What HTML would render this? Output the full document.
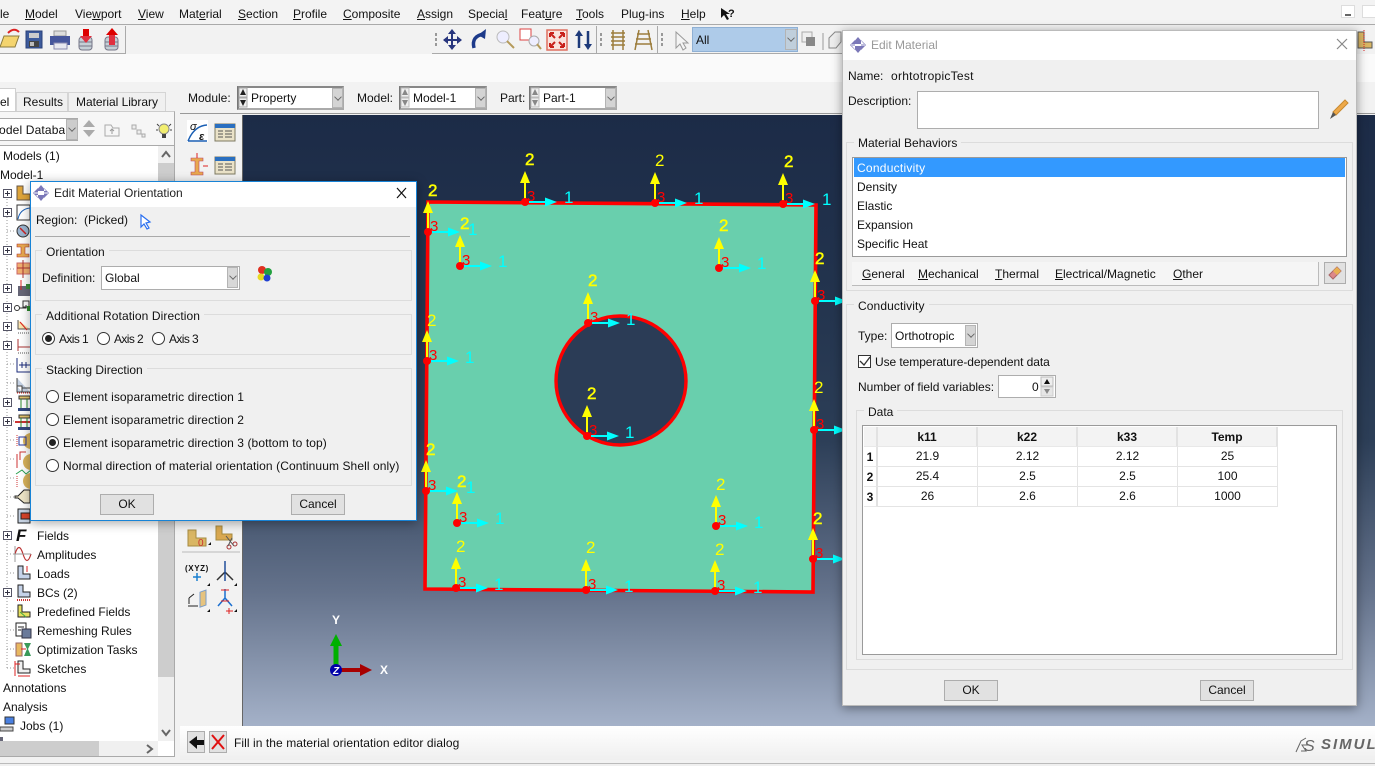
<!DOCTYPE html>
<html><head><meta charset="utf-8"><title>Abaqus</title>
<style>
html,body{margin:0;padding:0;background:#f0f0f0}
#p{position:relative;width:1375px;height:766px;overflow:hidden;background:#f2f2f2;font:12px/14px "Liberation Sans",sans-serif;color:#111}
.t{position:absolute;white-space:nowrap;font:12px/14px "Liberation Sans",sans-serif;color:#111}
.o{letter-spacing:.09px}
.a{letter-spacing:-.6px}
.b{position:absolute;box-sizing:border-box}
.g{position:absolute;box-sizing:border-box;border:1px solid #dcdcdc}
.btn{position:absolute;box-sizing:border-box;background:#e1e1e1;border:1px solid #adadad;text-align:center;line-height:19px;font-size:12px;color:#111}
.dd{position:absolute;box-sizing:border-box;background:#d4d4d4;border:1px solid #b4b4b4}
.dd:after{content:"";position:absolute;left:2px;top:5px;width:5px;height:5px;border-right:1px solid #666;border-bottom:1px solid #666;transform:rotate(45deg) scale(.9)}
.rad{position:absolute;box-sizing:border-box;width:13px;height:13px;border:1px solid #333;border-radius:50%;background:#fff}
.rad.on:after{content:"";position:absolute;left:2px;top:2px;width:7px;height:7px;border-radius:50%;background:#222}
svg{position:absolute;left:0;top:0;overflow:visible}
svg text{font-family:"Liberation Sans",sans-serif}
.y{fill:#ffff00;font-size:17px}.k{stroke:#ff0;stroke-width:.5}.r{fill:#f00;font-size:15px}.c{fill:#00ffff;font-size:17px}
.th{position:absolute;box-sizing:border-box;background:#f3f3f3;border-right:2px solid #e2e2e2;border-bottom:1px solid #e8e8e8;font-weight:bold;text-align:center;line-height:20px;height:20px;font-size:12px}
.td{position:absolute;box-sizing:border-box;border-right:1px solid #e4e4e4;border-bottom:1px solid #e4e4e4;text-align:center;line-height:19px;height:20px;font-size:12px}
</style></head><body><div id="p">

<!-- top menu -->
<div class="b" style="left:0;top:0;width:1375px;height:25px;background:#f3f3f3;border-bottom:1px solid #aaa"></div>
<div class="t" style="left:0;top:7px">le</div>
<div class="t" style="left:25px;top:7px"><u>M</u>odel</div>
<div class="t" style="left:75px;top:7px">Vie<u>w</u>port</div>
<div class="t" style="left:138px;top:7px"><u>V</u>iew</div>
<div class="t" style="left:179px;top:7px">Mat<u>e</u>rial</div>
<div class="t" style="left:238px;top:7px"><u>S</u>ection</div>
<div class="t" style="left:293px;top:7px"><u>P</u>rofile</div>
<div class="t" style="left:343px;top:7px"><u>C</u>omposite</div>
<div class="t" style="left:417px;top:7px"><u>A</u>ssign</div>
<div class="t" style="left:468px;top:7px">Specia<u>l</u></div>
<div class="t" style="left:521px;top:7px">Feat<u>u</u>re</div>
<div class="t" style="left:576px;top:7px"><u>T</u>ools</div>
<div class="t" style="left:621px;top:7px">Plu<u>g</u>-ins</div>
<div class="t" style="left:681px;top:7px"><u>H</u>elp</div>
<div class="t" style="left:728px;top:7px;font-weight:bold;font-size:11px">?</div>

<!-- toolbars -->
<div class="b" style="left:0;top:26px;width:126px;height:28px;background:#f2f2f2;border-right:1px solid #aaa;border-bottom:1px solid #aaa"></div>
<div class="b" style="left:432px;top:26px;width:410px;height:28px;background:#f2f2f2;border-bottom:1px solid #aaa"></div>
<div class="b" style="left:596px;top:26px;width:1px;height:27px;background:#aaa"></div>
<div class="b" style="left:657px;top:26px;width:1px;height:27px;background:#aaa"></div>
<div class="b" style="left:126px;top:54px;width:1249px;height:28px;background:#fafafa"></div>
<div class="b" style="left:0;top:54px;width:126px;height:28px;background:#fafafa"></div>
<div class="b" style="left:692px;top:27px;width:106px;height:25px;background:#aecbe9;border:1px solid #8fb0d4"></div>
<div class="t" style="left:696px;top:33px">All</div>
<div class="dd" style="left:785px;top:29px;width:12px;height:21px;background:#c0cfdc"></div>
<!-- module bar -->
<div class="b" style="left:180px;top:82px;width:1195px;height:32px;background:#f2f2f2;border-bottom:1px solid #999"></div>
<div class="t" style="left:188px;top:91px">Module:</div>
<div class="b" style="left:237px;top:86px;width:107px;height:24px;background:#fff;border:2px solid #aaa;border-left-color:#777;border-top-color:#888"></div>
<div class="dd" style="left:332px;top:88px;width:11px;height:20px"></div>
<div class="t" style="left:251px;top:91px">Property</div>
<div class="t" style="left:357px;top:91px">Model:</div>
<div class="b" style="left:399px;top:86px;width:88px;height:24px;background:#fff;border:2px solid #aaa;border-left-color:#777;border-top-color:#888"></div>
<div class="dd" style="left:475px;top:88px;width:11px;height:20px"></div>
<div class="t" style="left:413px;top:91px">Model-1</div>
<div class="t" style="left:500px;top:91px">Part:</div>
<div class="b" style="left:529px;top:86px;width:88px;height:24px;background:#fff;border:2px solid #aaa;border-left-color:#777;border-top-color:#888"></div>
<div class="dd" style="left:605px;top:88px;width:11px;height:20px"></div>
<div class="t" style="left:543px;top:91px">Part-1</div>

<!-- left panel -->
<div class="b" style="left:0;top:88px;width:16px;height:24px;background:#fff;border:1px solid #d0d0d0;border-left:0;border-bottom:0"></div>
<div class="b" style="left:16px;top:92px;width:52px;height:19px;background:#f0f0f0;border:1px solid #d5d5d5;border-bottom:0"></div>
<div class="b" style="left:68px;top:92px;width:98px;height:19px;background:#f0f0f0;border:1px solid #d5d5d5;border-bottom:0"></div>
<div class="t" style="left:0;top:95px">el</div>
<div class="t" style="left:23px;top:95px">Results</div>
<div class="t" style="left:76px;top:95px;letter-spacing:-.05px">Material Library</div>
<div class="b" style="left:0;top:111px;width:175px;height:34px;background:#f6f6f6;border-right:1px solid #aaa;border-top:1px solid #ccc"></div>
<div class="b" style="left:0;top:145px;width:175px;height:612px;background:#fff;border-right:1px solid #aaa;border-top:1px solid #aaa;border-bottom:1px solid #aaa"></div>
<div class="b" style="left:0;top:118px;width:78px;height:23px;background:#fff;border:1px solid #aaa;border-left:0"></div>
<div class="dd" style="left:66px;top:119px;width:12px;height:21px;background:#ccc"></div>
<div class="t" style="left:-1px;top:123px;width:66px;overflow:hidden;letter-spacing:.15px">odel Databas</div>
<!-- scrollbars -->
<div class="b" style="left:158px;top:146px;width:16px;height:595px;background:#f0f0f0"></div>
<div class="b" style="left:158px;top:163px;width:16px;height:514px;background:#cdcdcd"></div>
<div class="b" style="left:0;top:741px;width:158px;height:15px;background:#f0f0f0"></div>
<div class="b" style="left:0;top:741px;width:99px;height:15px;background:#cdcdcd"></div>

<!-- tree text -->
<div class="t" style="left:3px;top:149px">Models (1)</div>
<div class="t" style="left:0;top:168px">Model-1</div>
<div class="t" style="left:37px;top:529px">Fields</div>
<div class="t" style="left:37px;top:548px">Amplitudes</div>
<div class="t" style="left:37px;top:567px">Loads</div>
<div class="t" style="left:37px;top:586px">BCs (2)</div>
<div class="t" style="left:37px;top:605px">Predefined Fields</div>
<div class="t" style="left:37px;top:624px">Remeshing Rules</div>
<div class="t" style="left:37px;top:643px">Optimization Tasks</div>
<div class="t" style="left:37px;top:662px">Sketches</div>
<div class="t" style="left:3px;top:681px">Annotations</div>
<div class="t" style="left:3px;top:700px">Analysis</div>
<div class="t" style="left:20px;top:719px">Jobs (1)</div>

<!-- viewport & bottom bar -->
<div class="b" style="left:242px;top:115px;width:1133px;height:611px;background:linear-gradient(180deg,#1c2b47 0%,#23344e 30%,#2c3e57 53%,#64728b 78%,#a4b1c8 100%);border-left:1px solid #666"></div>
<div class="b" style="left:180px;top:726px;width:1195px;height:34px;background:linear-gradient(180deg,#fff,#efefef)"></div>
<div class="b" style="left:0;top:763px;width:1375px;height:3px;background:#f0f0f0;border-top:1px solid #bbb"></div>
<div class="b" style="left:187px;top:731px;width:18px;height:22px;background:#e1e1e1;border:1px solid #adadad"></div>
<div class="b" style="left:209px;top:731px;width:18px;height:22px;background:#e1e1e1;border:1px solid #adadad"></div>
<div class="t" style="left:234px;top:736px;letter-spacing:.07px">Fill in the material orientation editor dialog</div>
<div class="t" style="left:1321px;top:736px;font:italic bold 15px/18px 'Liberation Sans',sans-serif;color:#666;letter-spacing:2px">SIMUL</div>
<div class="b" style="left:1341px;top:5px;width:14px;height:13px;background:#fff;border:1px solid #ddd"></div>
<div class="b" style="left:1362px;top:5px;width:14px;height:13px;background:#fff;border:1px solid #ddd"></div>
<div class="b" style="left:1345px;top:14px;width:6px;height:2px;background:#666"></div>

<!-- main graphics -->
<svg width="1375" height="766" viewBox="0 0 1375 766">
<defs>
<g id="tr">
<path d="M0 0V-22" stroke="#ff0" stroke-width="2" fill="none"/><path d="M0-31L5-19H-5Z" fill="#ff0"/>
<path d="M4 0H24" stroke="#0ff" stroke-width="2" fill="none"/><path d="M32 0L20-4.500V4.500Z" fill="#0ff"/>
<circle r="4" fill="#f00"/>
</g>
<g id="tb"><rect x="-10" y="-8" width="20" height="17" fill="#eae2c8" stroke="#7d7a62"/><rect x="-10" y="-8" width="20" height="4" fill="#2a6fc0"/><path d="M-7-1H-2M0-1H7M-7 2H-2M0 2H7M-7 5H-2M0 5H7" stroke="#555"/></g>
</defs>

<!-- plate -->
<path fill-rule="evenodd" d="M428 202L816 205L813 592L425 589Z" fill="#69cfad" stroke="#f00" stroke-width="3.600"/>
<path d="M620 316C656 316 686 345 686 381C686 416 656 445 620 445C585 445 556 416 556 381C556 345 585 316 620 316Z" fill="#2b3c56" stroke="#f00" stroke-width="3.400"/>

<g transform="translate(525,202)"><use href="#tr"/><text class="y k" x="0" y="-37">2</text><text class="r" x="2" y="-1">3</text><text class="c" x="39" y="1">1</text></g>
<g transform="translate(655,203)"><use href="#tr"/><text class="y" x="0" y="-37">2</text><text class="r" x="2" y="-1">3</text><text class="c" x="39" y="1">1</text></g>
<g transform="translate(783,204)"><use href="#tr"/><text class="y k" x="1" y="-37">2</text><text class="r" x="2" y="-1">3</text><text class="c" x="39" y="1">1</text></g>
<g transform="translate(428,232)"><use href="#tr"/><text class="y k" x="0" y="-36">2</text><text class="r" x="2" y="-1">3</text><text class="c" x="40" y="3">1</text></g>
<g transform="translate(460,266)"><use href="#tr"/><text class="y k" x="0" y="-37">2</text><text class="r" x="2" y="-1">3</text><text class="c" x="38" y="1">1</text></g>
<g transform="translate(719,268)"><use href="#tr"/><text class="y k" x="0" y="-37">2</text><text class="r" x="2" y="-1">3</text><text class="c" x="38" y="1">1</text></g>
<g transform="translate(815,301)"><use href="#tr"/><text class="y k" x="0" y="-37">2</text><text class="r" x="2" y="-1">3</text></g>
<g transform="translate(588,323)"><use href="#tr"/><text class="y k" x="0" y="-37">2</text><text class="r" x="2" y="-1">3</text><text class="c" x="38" y="2">1</text></g>
<g transform="translate(427,361)"><use href="#tr"/><text class="y" x="0" y="-35">2</text><text class="r" x="2" y="-1">3</text><text class="c" x="38" y="2">1</text></g>
<g transform="translate(587,436)"><use href="#tr"/><text class="y k" x="0" y="-37">2</text><text class="r" x="2" y="-1">3</text><text class="c" x="38" y="2">1</text></g>
<g transform="translate(814,430)"><use href="#tr"/><text class="y" x="0" y="-37">2</text><text class="r" x="2" y="-1">3</text></g>
<g transform="translate(426,491)"><use href="#tr"/><text class="y k" x="0" y="-36">2</text><text class="r" x="2" y="-1">3</text><text class="c" x="40" y="2">1</text></g>
<g transform="translate(457,523)"><use href="#tr"/><text class="y k" x="0" y="-36">2</text><text class="r" x="2" y="-1">3</text><text class="c" x="38" y="1">1</text></g>
<g transform="translate(716,526)"><use href="#tr"/><text class="y" x="0" y="-36">2</text><text class="r" x="2" y="-1">3</text><text class="c" x="38" y="2">1</text></g>
<g transform="translate(813,559)"><use href="#tr"/><text class="y k" x="0" y="-35">2</text><text class="r" x="2" y="-1">3</text></g>
<g transform="translate(456,588)"><use href="#tr"/><text class="y" x="0" y="-36">2</text><text class="r" x="2" y="-1">3</text><text class="c" x="38" y="2">1</text></g>
<g transform="translate(586,590)"><use href="#tr"/><text class="y" x="0" y="-37">2</text><text class="r" x="2" y="-1">3</text><text class="c" x="38" y="2">1</text></g>
<g transform="translate(715,591)"><use href="#tr"/><text class="y" x="0" y="-36">2</text><text class="r" x="2" y="-1">3</text><text class="c" x="38" y="2">1</text></g>

<!-- global triad -->
<path d="M336 668V644" stroke="#00b000" stroke-width="5"/><path d="M336 634L342 646H330Z" fill="#00b000"/>
<path d="M340 670H362" stroke="#a80000" stroke-width="4"/><path d="M372 670L360 664V676Z" fill="#a80000"/>
<circle cx="336" cy="670" r="6" fill="#0000a8"/>
<text x="336" y="674" font-size="10" font-weight="bold" font-style="italic" fill="#fff" text-anchor="middle">Z</text>
<text x="336" y="624" font-size="12" font-weight="bold" fill="#fff" text-anchor="middle">Y</text>
<text x="384" y="674" font-size="12" font-weight="bold" fill="#fff" text-anchor="middle">X</text>

<!-- top-left toolbar icons -->
<path d="M0 47L4 36H19L15 47Z" fill="#f4d46e" stroke="#8a7a3c"/><path d="M8 33Q14 27 19 32" stroke="#d22" stroke-width="2" fill="none"/>
<rect x="26" y="31" width="16" height="17" fill="#3d5b9c" stroke="#2b417a"/><rect x="29" y="33" width="10" height="5" fill="#ccc"/><rect x="29" y="41" width="10" height="6" fill="#444"/><rect x="30" y="42" width="4" height="4" fill="#bbb"/>
<rect x="54" y="31" width="12" height="5" fill="#ddd" stroke="#999"/><rect x="50" y="36" width="20" height="9" fill="#46569c"/><rect x="54" y="43" width="13" height="6" fill="#e8e8f0" stroke="#8a8ab0"/>
<rect x="79" y="37" width="13" height="13" rx="3" fill="#c5cfd6" stroke="#778"/><path d="M79 42H92M79 46H92" stroke="#778"/><rect x="83" y="29" width="6" height="8" fill="#d00"/><path d="M80 36H92L86 43Z" fill="#e03040"/>
<rect x="105" y="37" width="13" height="13" rx="3" fill="#c5cfd6" stroke="#778"/><path d="M105 42H118M105 46H118" stroke="#778"/><rect x="109" y="35" width="6" height="10" fill="#e03040"/><path d="M106 35H118L112 28Z" fill="#d00"/>

<!-- right toolbar icons -->
<path d="M436 33v3M436 38v3M436 43v3M601 33v3M601 38v3M601 43v3M662 33v3M662 38v3M662 43v3" stroke="#999" stroke-width="2"/>
<path d="M452 31V48M444 40H461" stroke="#28367e" stroke-width="2"/><path d="M452 29L456 34H448ZM452 50L456 45H448ZM443 40L448 36V44ZM462 40L457 36V44Z" fill="#28367e"/>
<path d="M474 48Q471 36 484 34" stroke="#1d3a8a" stroke-width="3.500" fill="none"/><path d="M486 29L478 35L485 39Z" fill="#1d3a8a"/>
<circle cx="503" cy="37" r="6" fill="#eef" stroke="#bbb"/><path d="M507 41L514 48" stroke="#b59a5a" stroke-width="2"/>
<rect x="520" y="29" width="11" height="11" fill="#fff" stroke="#d44"/><circle cx="534" cy="41" r="5" fill="#eef" stroke="#aaa"/><path d="M537 44L541 49" stroke="#b59a5a" stroke-width="2"/>
<rect x="547" y="30" width="20" height="20" fill="#f9e2dc" stroke="#e07060" stroke-width="1.500"/><path d="M550 33L555 38M564 33L559 38M550 47L555 42M564 47L559 42M550 33H554M550 33V37M564 33H560M564 33V37M550 47H554M550 47V43M564 47H560M564 47V43" stroke="#c8201a" stroke-width="2" fill="none"/>
<path d="M579 48V33M588 31V46" stroke="#1d3a7a" stroke-width="2.500"/><path d="M579 30L583 36H575ZM588 50L592 44H584Z" fill="#1d3a7a"/>
<path d="M613 30V50M623 30V50M611 33H625M611 37H625M611 41H625M611 45H625" stroke="#9c7d3c" stroke-width="1.500"/>
<path d="M639 30L635 50M648 30L652 50M637 34H650M636 39H651M635 44H652" stroke="#9c7d3c" stroke-width="1.500"/>
<path d="M676 32L676 48L680 44L683 50L686 48L683 43L688 43Z" fill="#f4f4f4" stroke="#999"/>
<rect x="802" y="32" width="10" height="10" fill="#eee" stroke="#aaa"/><rect x="806" y="37" width="9" height="9" fill="#888"/>
<path d="M823 33V50" stroke="#999"/><path d="M829 38L835 32H841V42L836 48H829Z" fill="#eee" stroke="#888"/>
<path d="M1358 32H1364V42H1372V48H1358Z" fill="#d9b664" stroke="#555"/><path d="M1364 30V52" stroke="#d22" stroke-dasharray="1 1"/>

<!-- toolbox icons -->
<rect x="187" y="120" width="21" height="22" fill="#fff"/><path d="M188 141H207M188 141Q194 126 207 125" stroke="#1a5fb4" stroke-width="1.500" fill="none"/>
<text x="190" y="130" font-size="11" font-style="italic" font-family="Liberation Serif" fill="#111">σ</text><text x="199" y="140" font-size="11" font-weight="bold" font-style="italic" fill="#111">ε</text>
<use href="#tb" transform="translate(225,132)"/><use href="#tb" transform="translate(225,165)"/>
<path d="M191 158H203V161H199V172H203V175H191V172H195V161H191Z" fill="#e8a94f" stroke="#b46" stroke-width=".6"/><path d="M197 158V153M203 166H208" stroke="#d22"/>
<path d="M188 530H196V538H206V546H188Z" fill="#d9b664" stroke="#a58a40"/><text x="198" y="546" font-size="10" fill="#c33">0</text>
<path d="M216 526H222V534H232V540H216Z" fill="#d9a850" stroke="#a58a40"/><circle cx="229" cy="547" r="2" fill="none" stroke="#a33"/><circle cx="235" cy="544" r="2" fill="none" stroke="#a33"/><path d="M226 536L234 546M232 538L228 546" stroke="#555"/>
<path d="M182 552H240" stroke="#bbb"/>
<text x="197" y="571" font-size="8" font-weight="bold" fill="#111" text-anchor="middle" letter-spacing=".6">(XYZ)</text><path d="M197 573V581M193 577H201" stroke="#1a7fd0" stroke-width="1.500"/>
<path d="M225 561V581M225 572L217 580M225 572L233 580" stroke="#333" stroke-width="1.500"/><path d="M225 561V581" stroke="#1a5fd0"/>
<rect x="200" y="592" width="6" height="15" fill="#e6c37e" stroke="#7a9cc8" transform="skewY(-20) translate(0,73)"/><path d="M189 598L194 594M189 598V604M188 606H198" stroke="#222"/>
<path d="M225 589V598M225 598L218 606M225 598L232 606" stroke="#1a6fd0" stroke-width="1.500"/><path d="M221 590H229M221 601H229M226 611H233M229 608V614" stroke="#d22"/>
<path d="M208 545l3 0 0-3ZM207 586h3v-3ZM234 586h3v-3ZM207 612h3v-3ZM234 612h3v-3Z" fill="#111"/>

<!-- tree lines -->
<path d="M7 190V668" stroke="#9a9a9a" stroke-dasharray="1 2"/>
<path d="M7 231H16M7 269H16M7 364H16M7 383H16M7 421H16M7 440H16M7 459H16M7 478H16M7 497H16M7 516H16M7 554H14M7 573H14M7 611H14M7 630H14M7 649H14M7 668H14" stroke="#9a9a9a" stroke-dasharray="1 2"/>
<g fill="#fff" stroke="#556"><rect x="3.500" y="189.500" width="8" height="8"/><rect x="3.500" y="208.500" width="8" height="8"/><rect x="3.500" y="246.500" width="8" height="8"/><rect x="3.500" y="284.500" width="8" height="8"/><rect x="3.500" y="303.500" width="8" height="8"/><rect x="3.500" y="322.500" width="8" height="8"/><rect x="3.500" y="341.500" width="8" height="8"/><rect x="3.500" y="398.500" width="8" height="8"/><rect x="3.500" y="417.500" width="8" height="8"/><rect x="3.500" y="531.500" width="8" height="8"/><rect x="3.500" y="588.500" width="8" height="8"/></g>
<path d="M5 193.500H10M7.500 191V196M5 212.500H10M7.500 210V215M5 250.500H10M7.500 248V253M5 288.500H10M7.500 286V291M5 307.500H10M7.500 305V310M5 326.500H10M7.500 324V329M5 345.500H10M7.500 343V348M5 402.500H10M7.500 400V405M5 421.500H10M7.500 419V424M5 535.500H10M7.500 533V538M5 592.500H10M7.500 590V595" stroke="#334"/>
<!-- tree icons under dialog -->
<path d="M17 186H23V194H30V200H17Z" fill="#dfa53a" stroke="#654"/>
<rect x="17" y="205" width="13" height="15" fill="#fff" stroke="#333"/><path d="M18 219Q20 209 30 208" stroke="#1a5fb4" fill="none"/>
<circle cx="23" cy="231" r="6" fill="#9bb5d0" stroke="#333"/><path d="M20 228L26 234" stroke="#c22" stroke-width="1.500"/>
<path d="M17 244H29V247H25V254H29V257H17V254H21V247H17Z" fill="#e8a94f" stroke="#a33" stroke-width=".6"/>
<rect x="17" y="263" width="13" height="11" fill="#f0b070" stroke="#c66"/><path d="M23 260V278M17 268H30" stroke="#a33"/>
<rect x="18" y="286" width="12" height="10" fill="#667"/><path d="M21 280V290" stroke="#d22"/><rect x="26" y="284" width="4" height="5" fill="#3a8a3a"/>
<circle cx="17" cy="308" r="2.500" fill="#fff" stroke="#333"/><rect x="23" y="301" width="6" height="6" fill="#fff" stroke="#333"/><path d="M19 308H26V305" stroke="#333" fill="none"/><rect x="27" y="306" width="3" height="5" fill="#2a8a2a"/>
<path d="M18 320V329H30" stroke="#555" fill="#fbe6b0"/><path d="M18 333H30" stroke="#555" stroke-dasharray="1 1"/><path d="M20 322L27 330" stroke="#d22"/>
<path d="M18 339V351M18 347H30" stroke="#a33"/><path d="M18 353H30" stroke="#555" stroke-dasharray="1 1"/>
<path d="M17 358V372H30M19 365H30" stroke="#1a2a7a" fill="none"/><path d="M22 362V368M26 362V368" stroke="#1a2a7a"/>
<path d="M17 378V392H30M17 386H22V392M22 388H30" stroke="#444" fill="#c5d2e4"/><path d="M17 393H30" stroke="#d22" stroke-dasharray="1 1"/>
<rect x="19" y="396" width="11" height="3" fill="#e3c46c" stroke="#333"/><rect x="18" y="408" width="12" height="3" fill="#344a80"/><path d="M21 399V408M27 399V408" stroke="#2a8a2a"/>
<rect x="19" y="415" width="11" height="3" fill="#e3c46c" stroke="#333"/><rect x="18" y="427" width="12" height="3" fill="#344a80"/><path d="M15 422H30" stroke="#c33" stroke-width="2"/><path d="M21 418V427M27 418V427" stroke="#2a8a2a"/>
<circle cx="31" cy="441" r="8" fill="#d8b25a"/><rect x="19" y="437" width="7" height="8" fill="none" stroke="#2838a0"/><path d="M17 435V447" stroke="#c33" stroke-dasharray="1 1"/>
<circle cx="31" cy="462" r="8" fill="#d8b25a"/><path d="M20 460V452H26M17 454V468" stroke="#c33" fill="none"/>
<circle cx="31" cy="481" r="8" fill="#d8b25a"/><path d="M16 474L22 470L26 474L31 470" stroke="#2aa050" fill="none"/><path d="M17 476V488" stroke="#c33" stroke-dasharray="1 1"/>
<path d="M15 496H18L24 490H30V503H24L18 498H15Z" fill="#efe6c8" stroke="#222"/>
<rect x="18" y="509" width="12" height="14" fill="#c8d4e4" stroke="#222"/><rect x="21" y="513" width="9" height="6" fill="#d8442a" stroke="#222"/>

<!-- lower tree icons -->
<text x="16" y="541" font-family="Liberation Serif" font-size="17" font-style="italic" font-weight="bold" fill="#111">F</text>
<path d="M15 546V562" stroke="#999"/><path d="M15 554Q19 541 23 554T31 554" stroke="#b33" stroke-width="1.200" fill="none"/><path d="M14 554H31" stroke="#999"/>
<path d="M18 566V579H30V574H23V566Z" fill="#c5d2e8" stroke="#222"/><path d="M27 566V572" stroke="#d22"/>
<path d="M18 585V597H30V592H23V585Z" fill="#c5d2e8" stroke="#222"/><path d="M17 600H30" stroke="#c33" stroke-dasharray="1 1" stroke-width="2"/>
<path d="M18 605V617H30V612H22V605Z" fill="#e8e060" stroke="#222"/><path d="M20 612L26 617" stroke="#4a4"/>
<rect x="16" y="623" width="10" height="13" fill="#fff" stroke="#222"/><rect x="22" y="629" width="9" height="9" fill="#6a7a9a" stroke="#334"/><path d="M18 627H24M18 630H21" stroke="#222"/>
<rect x="16" y="643" width="6" height="13" fill="#e8b860" stroke="#966"/><path d="M24 643H31L28 649L31 656H24L27 649Z" fill="#3a9a5a"/><path d="M21 649H26" stroke="#d22"/>
<path d="M18 661V673H30V669H23V661Z" fill="#f0f0f0" stroke="#222"/><path d="M15 664H20M18 676H30M15 661V676" stroke="#d22"/>
<rect x="5" y="717" width="9" height="7" fill="#4a80e0" stroke="#333"/><rect x="0" y="727" width="13" height="4" fill="#ccc" stroke="#444"/>
<rect x="0" y="737" width="3" height="4" fill="#667"/>

<!-- panel tool icons -->
<path d="M89 120L95 127H83ZM89 137L95 130H83Z" fill="#aaa"/>
<path d="M105 125H111L113 128H119V136H105Z" fill="#f6f6f6" stroke="#aaa"/><path d="M112 130V134M110 131L112 129L114 131" stroke="#999" fill="none"/>
<path d="M132 125H136V129H132ZM137 130H141V134H137ZM142 134H145V137H142Z" fill="#eee" stroke="#aaa"/>
<circle cx="164" cy="129" r="5" fill="#f2ee70" stroke="#888"/><rect x="162" y="134" width="4" height="4" fill="#444"/><path d="M157 124L159 126M171 124L169 126M156 130H158M170 130H172" stroke="#444"/>
<path d="M162 157L166 152L170 157" stroke="#666" stroke-width="2" fill="none"/>
<path d="M162 730L166 735L170 730" stroke="#666" stroke-width="2" fill="none"/>
<path d="M147 745L152 749L147 753" stroke="#666" stroke-width="2" fill="none"/>
<!-- combo spinners -->
<rect x="239" y="88" width="8" height="9" fill="#eee" stroke="#aaa"/><rect x="239" y="98" width="8" height="9" fill="#eee" stroke="#aaa"/><path d="M243 89L246 95H240ZM243 106L246 100H240Z" fill="#222"/>
<rect x="401" y="88" width="8" height="9" fill="#eee" stroke="#bbb"/><rect x="401" y="98" width="8" height="9" fill="#eee" stroke="#bbb"/><path d="M405 89L408 95H402ZM405 106L408 100H402Z" fill="#888"/>
<rect x="531" y="88" width="8" height="9" fill="#eee" stroke="#bbb"/><rect x="531" y="98" width="8" height="9" fill="#eee" stroke="#bbb"/><path d="M535 89L538 95H532ZM535 106L538 100H532Z" fill="#888"/>

<!-- prompt icons -->
<path d="M189 742L197 736V740H204V745H197V749Z" fill="#111"/>
<path d="M212 735L224 749M224 735L212 749" stroke="#e01010" stroke-width="2"/>
<!-- logo -->
<path d="M1296 752L1301 741L1306 738M1301 751H1306L1302 745H1308" stroke="#666" fill="none"/>
<text x="1304" y="751" font-size="16" font-style="italic" fill="#666">S</text>
<!-- cursor help -->
<path d="M721 8V18L724 15L727 20L729 19L726 14H730Z" fill="#111"/>
</svg>

<!-- ORIENTATION DIALOG -->
<div class="b" style="left:30px;top:181px;width:387px;height:340px;background:#f0f0f0;border:1px solid #1783d6;box-shadow:0 2px 10px rgba(0,0,0,.35)"></div>
<div class="b" style="left:31px;top:182px;width:385px;height:25px;background:#fff"></div>
<div class="t" style="left:54px;top:186px;color:#222">Edit Material Orientation</div>
<div class="t" style="left:36px;top:213px">Region:</div>
<div class="t" style="left:84px;top:213px">(Picked)</div>
<div class="b" style="left:35px;top:236px;width:375px;height:1px;background:#aaa"></div>
<div class="g" style="left:35px;top:250px;width:377px;height:51px"></div>
<div class="t" style="left:42px;top:245px;background:#f0f0f0;padding:0 4px">Orientation</div>
<div class="t" style="left:42px;top:271px">Definition:</div>
<div class="b" style="left:101px;top:266px;width:139px;height:24px;background:#fff;border:1px solid #adadad"></div>
<div class="t" style="left:105px;top:271px">Global</div>
<div class="dd" style="left:227px;top:267px;width:11px;height:21px;background:#d8d8d8"></div>
<div class="g" style="left:35px;top:314px;width:377px;height:41px"></div>
<div class="t o" style="left:42px;top:309px;background:#f0f0f0;padding:0 4px">Additional Rotation Direction</div>
<div class="rad on" style="left:42px;top:332px"></div><div class="t a" style="left:59px;top:332px">Axis 1</div>
<div class="rad" style="left:97px;top:332px"></div><div class="t a" style="left:114px;top:332px">Axis 2</div>
<div class="rad" style="left:152px;top:332px"></div><div class="t a" style="left:169px;top:332px">Axis 3</div>
<div class="g" style="left:35px;top:368px;width:377px;height:118px"></div>
<div class="t" style="left:42px;top:363px;background:#f0f0f0;padding:0 4px">Stacking Direction</div>
<div class="rad" style="left:46px;top:390px"></div><div class="t o" style="left:63px;top:390px">Element isoparametric direction 1</div>
<div class="rad" style="left:46px;top:413px"></div><div class="t o" style="left:63px;top:413px">Element isoparametric direction 2</div>
<div class="rad on" style="left:46px;top:436px"></div><div class="t o" style="left:63px;top:436px">Element isoparametric direction 3 (bottom to top)</div>
<div class="rad" style="left:46px;top:459px"></div><div class="t o" style="left:63px;top:459px">Normal direction of material orientation (Continuum Shell only)</div>
<div class="btn" style="left:100px;top:494px;width:54px;height:21px">OK</div>
<div class="btn" style="left:291px;top:494px;width:54px;height:21px">Cancel</div>
<svg width="1375" height="766" viewBox="0 0 1375 766">
<path d="M41 185L46 191H36ZM41 201L46 195H36ZM33 193L38 188V198ZM49 193L44 188V198Z" fill="#7b78b8"/><path d="M34 193H48" stroke="#fff" stroke-width="1"/>
<path d="M397 188L406 198M406 188L397 198" stroke="#111" stroke-width="1.200"/>
<path d="M141 215L141 227L144 224L147 229L149 228L146 223L150 222Z" fill="#fff" stroke="#2a6ff0" stroke-width="1.200"/>
<circle cx="262" cy="270" r="4" fill="#e03020"/><circle cx="268" cy="272" r="4" fill="#22a040"/><circle cx="261" cy="277" r="3.500" fill="#e8d820"/><circle cx="267" cy="278" r="3.500" fill="#2040d0"/>
</svg>

<!-- MATERIAL DIALOG -->
<div class="b" style="left:842px;top:30px;width:515px;height:676px;background:#f0f0f0;border:1px solid #bbb;box-shadow:0 2px 10px rgba(0,0,0,.4)"></div>
<div class="b" style="left:843px;top:31px;width:513px;height:29px;background:#fff"></div>
<div class="t" style="left:871px;top:38px;color:#999">Edit Material</div>
<div class="t" style="left:848px;top:69px">Name:</div>
<div class="t" style="left:891px;top:69px;letter-spacing:.27px">orhtotropicTest</div>
<div class="t" style="left:848px;top:94px">Description:</div>
<div class="b" style="left:917px;top:91px;width:402px;height:38px;background:#fff;border:1px solid #adadad"></div>
<div class="g" style="left:846px;top:142px;width:507px;height:149px"></div>
<div class="t" style="left:854px;top:136px;background:#f0f0f0;padding:0 4px">Material Behaviors</div>
<div class="b" style="left:852px;top:157px;width:495px;height:100px;background:#fff;border:1px solid #9a9a9a"></div>
<div class="b" style="left:854px;top:158px;width:491px;height:19px;background:#3399ff"></div>
<div class="t" style="left:857px;top:161px;color:#fff;letter-spacing:.25px">Conductivity</div>
<div class="t" style="left:857px;top:180px">Density</div>
<div class="t" style="left:857px;top:199px">Elastic</div>
<div class="t" style="left:857px;top:218px">Expansion</div>
<div class="t" style="left:857px;top:237px">Specific Heat</div>
<div class="b" style="left:852px;top:262px;width:467px;height:24px;background:#f5f5f5;border-bottom:1px solid #bbb;border-right:1px solid #bbb"></div>
<div class="t" style="left:862px;top:267px"><u>G</u>eneral</div>
<div class="t" style="left:918px;top:267px"><u>M</u>echanical</div>
<div class="t" style="left:995px;top:267px"><u>T</u>hermal</div>
<div class="t" style="left:1055px;top:267px"><u>E</u>lectrical/Magnetic</div>
<div class="t" style="left:1173px;top:267px"><u>O</u>ther</div>
<div class="b" style="left:1324px;top:262px;width:22px;height:22px;background:#e1e1e1;border:1px solid #adadad"></div>
<div class="g" style="left:846px;top:304px;width:507px;height:366px"></div>
<div class="t" style="left:854px;top:299px;background:#f0f0f0;padding:0 4px;letter-spacing:.1px">Conductivity</div>
<div class="t" style="left:858px;top:329px">Type:</div>
<div class="b" style="left:891px;top:323px;width:87px;height:25px;background:#fff;border:1px solid #adadad"></div>
<div class="t" style="left:895px;top:329px">Orthotropic</div>
<div class="dd" style="left:965px;top:325px;width:11px;height:21px"></div>
<div class="b" style="left:858px;top:355px;width:13px;height:13px;background:#fff;border:1px solid #333"></div>
<div class="t" style="left:875px;top:355px;letter-spacing:-.07px">Use temperature-dependent data</div>
<div class="t" style="left:858px;top:380px">Number of field variables:</div>
<div class="b" style="left:998px;top:375px;width:58px;height:23px;background:#fff;border:1px solid #adadad"></div>
<div class="t" style="left:1032px;top:380px">0</div>
<div class="g" style="left:856px;top:410px;width:487px;height:250px"></div>
<div class="t" style="left:864px;top:405px;background:#f0f0f0;padding:0 4px">Data</div>
<div class="b" style="left:862px;top:425px;width:475px;height:230px;background:#fff;border:1px solid #9a9a9a"></div>
<div class="th" style="left:864px;top:427px;width:14px"></div>
<div class="th" style="left:878px;top:427px;width:100px">k11</div>
<div class="th" style="left:978px;top:427px;width:100px">k22</div>
<div class="th" style="left:1078px;top:427px;width:100px">k33</div>
<div class="th" style="left:1178px;top:427px;width:100px">Temp</div>
<div class="th" style="left:864px;top:447px;width:14px;background:#fff">1</div>
<div class="td" style="left:878px;top:447px;width:100px">21.9</div><div class="td" style="left:978px;top:447px;width:100px">2.12</div><div class="td" style="left:1078px;top:447px;width:100px">2.12</div><div class="td" style="left:1178px;top:447px;width:100px">25</div>
<div class="th" style="left:864px;top:467px;width:14px;background:#fff">2</div>
<div class="td" style="left:878px;top:467px;width:100px">25.4</div><div class="td" style="left:978px;top:467px;width:100px">2.5</div><div class="td" style="left:1078px;top:467px;width:100px">2.5</div><div class="td" style="left:1178px;top:467px;width:100px">100</div>
<div class="th" style="left:864px;top:487px;width:14px;background:#fff">3</div>
<div class="td" style="left:878px;top:487px;width:100px">26</div><div class="td" style="left:978px;top:487px;width:100px">2.6</div><div class="td" style="left:1078px;top:487px;width:100px">2.6</div><div class="td" style="left:1178px;top:487px;width:100px">1000</div>
<div class="btn" style="left:944px;top:680px;width:54px;height:21px">OK</div>
<div class="btn" style="left:1200px;top:680px;width:54px;height:21px">Cancel</div>
<svg width="1375" height="766" viewBox="0 0 1375 766">
<path d="M858 37L864 44H852ZM858 53L864 46H852ZM850 45L855 40V50ZM866 45L861 40V50Z" fill="#7b78b8"/><path d="M851 45H865" stroke="#fff"/>
<path d="M1337 39L1347 49M1347 39L1337 49" stroke="#888" stroke-width="1.200"/>
<path d="M1333 112L1345 100L1348 103L1336 115Z" fill="#eea94a" stroke="#c88a30"/><path d="M1333 112L1330 119L1336 115Z" fill="#555"/>
<path d="M1329 275L1337 267L1341 271L1333 279Z" fill="#d88" stroke="#a66"/><path d="M1333 271L1337 267L1341 271L1337 275Z" fill="#e8b050"/>
<path d="M860 361L864 365L870 357" stroke="#333" stroke-width="1.300" fill="none"/>
<rect x="1041" y="377" width="12" height="9" fill="#eee" stroke="#bbb"/><rect x="1041" y="387" width="12" height="9" fill="#e6e6e6" stroke="#ccc"/><path d="M1047 379L1050 384H1044Z" fill="#111"/><path d="M1047 394L1050 389H1044Z" fill="#888"/>
</svg>

</div></body></html>
